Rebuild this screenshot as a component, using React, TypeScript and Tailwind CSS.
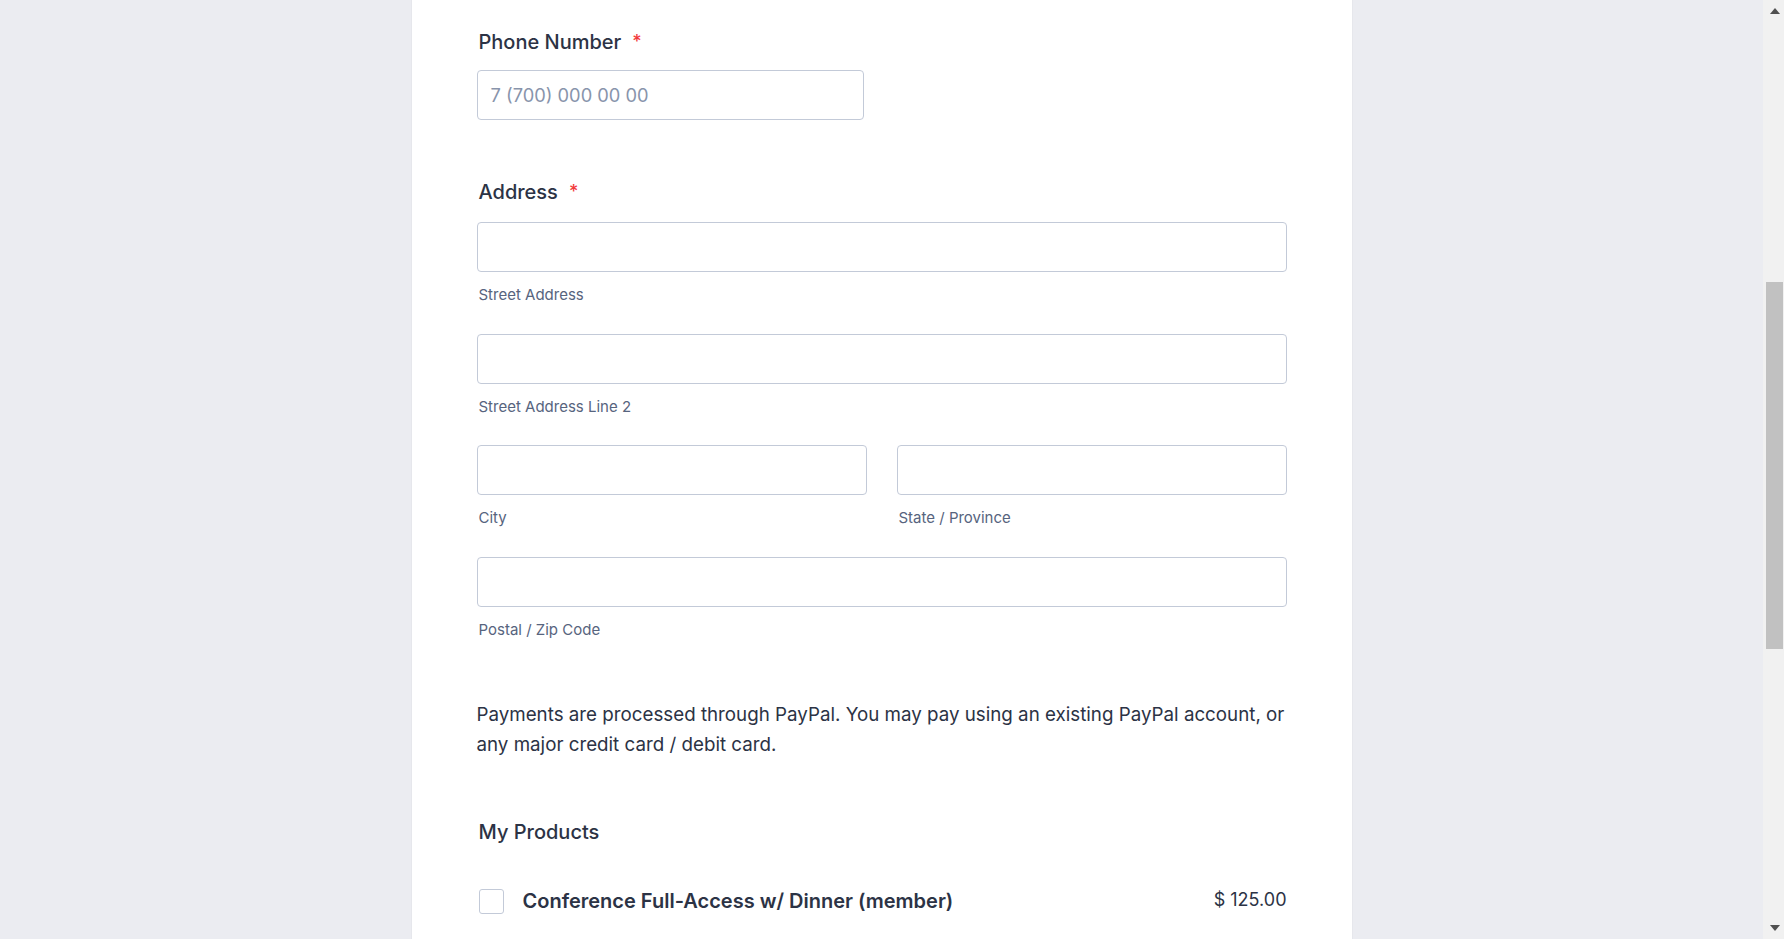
import React from "react";

const font = { fontFamily: "Inter, 'Noto Sans', sans-serif" };

function Input({ className = "" }: { className?: string }) {
  return (
    <div
      className={`h-[50px] rounded-[4px] border border-[#c3cad8] bg-white ${className}`}
    />
  );
}

function SubField({ label, className = "" }: { label: string; className?: string }) {
  return (
    <div className={`flex flex-col ${className}`}>
      <Input />
      <div className="mt-[14px] h-[18px] pl-[2px] text-[15px] leading-[18px] text-[#57647e]">
        {label}
      </div>
    </div>
  );
}

function Label({ text, className = "" }: { text: string; className?: string }) {
  return (
    <div className={`flex items-start pl-[2px] text-[20px] font-medium leading-[24px] text-[#2c3345] ${className}`}>
      <span>{text}</span>
      <span className="ml-[11px] mt-[2px] text-[18px] leading-[20px] text-[#f23a3c]">*</span>
    </div>
  );
}

export default function App() {
  return (
    <div className="flex h-screen w-full overflow-hidden bg-[#ebecf1]" style={font}>
      <div className="flex flex-1 justify-center">
        <div className="flex h-full w-[940px] flex-col bg-white px-[65px] shadow-[0_0_1px_rgba(0,0,0,0.12)]">
          {/* Phone */}
          <Label text="Phone Number" className="mt-[30px]" />
          <div className="mt-[16px] flex h-[50px] w-[387px] items-center rounded-[4px] border border-[#c3cad8] bg-white px-[13px] pt-[1px] text-[18.3px] text-[#8894ab]">
            7 (700) 000 00 00
          </div>

          {/* Address */}
          <Label text="Address" className="mt-[60px]" />
          <SubField label="Street Address" className="mt-[18px]" />
          <SubField label="Street Address Line 2" className="mt-[29.5px]" />
          <div className="mt-[29.5px] grid grid-cols-2 gap-[30px]">
            <SubField label="City" />
            <SubField label="State / Province" />
          </div>
          <SubField label="Postal / Zip Code" className="mt-[29.5px]" />

          {/* Payment info */}
          <p className="mt-[61px] text-[18.75px] leading-[30px] text-[#2c3345]">
            Payments are processed through PayPal. You may pay using an existing PayPal account, or any major credit card / debit card.
          </p>

          <div className="mt-[60px] pl-[2px] text-[20px] font-medium leading-[24px] text-[#2c3345]">
            My Products
          </div>

          <div className="mt-[45px] flex items-center pl-[2px]">
            <div className="h-[25px] w-[25px] shrink-0 rounded-[3px] border border-[#c3cad8] bg-white" />
            <div className="ml-[19px] flex-1 text-[20px] font-semibold leading-[24px] text-[#2c3345]">
              Conference Full-Access w/ Dinner (member)
            </div>
            <div className="mb-[2px] text-[18px] leading-[22px] text-[#2c3345]">$ 125.00</div>
          </div>
        </div>
      </div>

      {/* scrollbar */}
      <div className="flex h-full w-[21px] flex-col items-center bg-[#f1f1f1] pl-[2px]">
        <svg width="10" height="6" viewBox="0 0 10 6" className="mt-[8px]">
          <polygon points="5,0 10,6 0,6" fill="#505050" />
        </svg>
        <div className="mt-[268px] h-[367px] w-[17px] bg-[#c1c1c1]" />
        <div className="flex-1" />
        <svg width="10" height="6" viewBox="0 0 10 6" className="mb-[8px]">
          <polygon points="0,0 10,0 5,6" fill="#505050" />
        </svg>
      </div>
    </div>
  );
}
